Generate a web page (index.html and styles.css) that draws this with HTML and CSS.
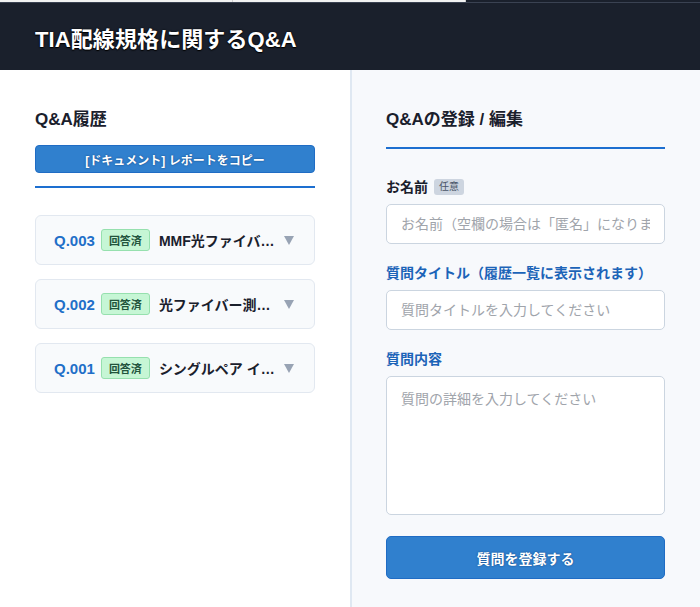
FILE: index.html
```html
<!DOCTYPE html>
<html lang="ja">
<head>
<meta charset="utf-8">
<title>TIA配線規格に関するQ&amp;A</title>
<link rel="stylesheet" href="styles.css">
</head>
<body>
<div class="topstrip"><span class="tab"></span><span class="tab"></span></div>
<header class="appbar">
  <h1 class="app-title">TIA配線規格に関するQ&amp;A</h1>
</header>
<main class="layout">
  <section class="history">
    <h2 class="section-title">Q&amp;A履歴</h2>
    <button class="btn btn-small" type="button">[ドキュメント] レポートをコピー</button>
    <hr class="rule">
    <ul class="qa-list">
      <li class="qa-card">
        <span class="qa-no">Q.003</span>
        <span class="status">回答済</span>
        <span class="qa-title">MMF光ファイバーの伝送距離について</span>
        <span class="caret" aria-hidden="true"></span>
      </li>
      <li class="qa-card">
        <span class="qa-no">Q.002</span>
        <span class="status">回答済</span>
        <span class="qa-title">光ファイバー測定の基準について</span>
        <span class="caret" aria-hidden="true"></span>
      </li>
      <li class="qa-card">
        <span class="qa-no">Q.001</span>
        <span class="status">回答済</span>
        <span class="qa-title">シングルペア イーサネットについて</span>
        <span class="caret" aria-hidden="true"></span>
      </li>
    </ul>
  </section>
  <section class="editor">
    <h2 class="section-title with-rule">Q&amp;Aの登録 / 編集</h2>
    <form class="form">
      <label class="field">
        <span class="label">お名前 <span class="optional">任意</span></span>
        <input class="input" type="text" placeholder="お名前（空欄の場合は「匿名」になります）">
      </label>
      <label class="field">
        <span class="label label-accent">質問タイトル（履歴一覧に表示されます）</span>
        <input class="input" type="text" placeholder="質問タイトルを入力してください">
      </label>
      <label class="field">
        <span class="label label-accent">質問内容</span>
        <textarea class="input textarea" placeholder="質問の詳細を入力してください"></textarea>
      </label>
      <button class="btn btn-large" type="button">質問を登録する</button>
    </form>
  </section>
</main>
</body>
</html>
```

FILE: styles.css
```css
* { box-sizing: border-box; }

html, body {
  margin: 0;
  height: 100%;
}

body {
  font-family: "Liberation Sans", "Noto Sans CJK JP", sans-serif;
  color: #1a202c;
  background: #ffffff;
  display: flex;
  flex-direction: column;
  min-height: 607px;
}

/* thin strip of the window above the app bar */
.topstrip {
  height: 3px;
  display: flex;
  background: #1a202c;
  border-bottom: 1px solid #3a4252;
}
.tab {
  width: 233px;
  height: 2px;
  background: #f2f2f2;
  border-right: 1px solid #d0d0d0;
}

.appbar {
  background: #1a202c;
  height: 67px;
  display: flex;
  align-items: center;
  padding: 0 35px;
}

.app-title {
  margin: 0;
  color: #ffffff;
  font-size: 22px;
  font-weight: 700;
  letter-spacing: 0.1px;
  text-shadow: 0 0 2px #000, 0 1px 1px #000;
}

.layout {
  flex: 1;
  display: grid;
  grid-template-columns: 350px 1fr;
}

.history {
  padding: 38px 35px 20px 35px;
  background: #ffffff;
}

.editor {
  padding: 38px 35px 20px 34px;
  background: #f7f9fc;
  border-left: 2px solid #dfe8f2;
}

.section-title {
  margin: 0;
  font-size: 17px;
  line-height: 24px;
  font-weight: 700;
  color: #1a202c;
}

.section-title.with-rule {
  padding-bottom: 15px;
  border-bottom: 2px solid #1d6fd0;
  margin-bottom: 28px;
}

.btn {
  display: block;
  width: 100%;
  border: 1px solid #1f6cc4;
  background: #3080ce;
  color: #ffffff;
  font-family: inherit;
  font-weight: 700;
  border-radius: 4px;
  text-shadow: 0 0 2px rgba(10, 60, 120, 0.9);
  cursor: pointer;
}

.btn-small {
  margin-top: 13px;
  height: 28px;
  font-size: 12px;
}

.btn-large {
  margin-top: 21px;
  height: 43px;
  font-size: 14px;
  border-radius: 5px;
}

.rule {
  margin: 13px 0 0 0;
  border: 0;
  height: 2px;
  background: #1d6fd0;
}

.qa-list {
  list-style: none;
  margin: 27px 0 0 0;
  padding: 0;
  display: flex;
  flex-direction: column;
  gap: 14px;
}

.qa-card {
  height: 50px;
  display: flex;
  align-items: center;
  padding: 0 18px 0 18px;
  background: #f8fafc;
  border: 1px solid #e2e8f0;
  border-radius: 6px;
}

.qa-no {
  color: #1f6fc8;
  font-weight: 700;
  font-size: 15px;
  flex: none;
}

.status {
  margin-left: 6px;
  flex: none;
  height: 22px;
  padding: 0 7px;
  display: inline-flex;
  align-items: center;
  font-size: 11px;
  font-weight: 700;
  color: #22543d;
  background: #c6f6d5;
  border: 1px solid #96e0ae;
  border-radius: 3px;
}

.qa-title {
  margin-left: 9px;
  width: 116px;
  flex: none;
  font-size: 14px;
  font-weight: 700;
  white-space: nowrap;
  overflow: hidden;
  text-overflow: ellipsis;
}

/* expand indicator: small downward triangle */
.caret {
  margin-left: auto;
  margin-right: 2px;
  width: 0;
  height: 0;
  border-left: 5px solid transparent;
  border-right: 5px solid transparent;
  border-top: 9px solid #98a3b4;
}

.form {
  display: flex;
  flex-direction: column;
}

.field {
  display: flex;
  flex-direction: column;
  margin-bottom: 19px;
}

.label {
  display: flex;
  align-items: center;
  gap: 6px;
  font-size: 14px;
  line-height: 20px;
  font-weight: 700;
  color: #1a202c;
  margin-bottom: 7px;
}

.label-accent {
  color: #1c64b8;
}

.optional {
  font-size: 10px;
  line-height: 16px;
  font-weight: 400;
  padding: 0 5px;
  background: #cdd5e0;
  color: #4a5568;
  border-radius: 3px;
}

.input {
  width: 100%;
  height: 40px;
  padding: 0 14px;
  font-family: inherit;
  font-size: 14px;
  color: #1a202c;
  background: #ffffff;
  border: 1px solid #cbd5e0;
  border-radius: 5px;
  outline: none;
}

.input::placeholder {
  color: #a0a4ab;
}

.textarea {
  height: 139px;
  padding: 12px 14px;
  resize: none;
  line-height: 20px;
}

.field:last-of-type {
  margin-bottom: 0;
}
```
